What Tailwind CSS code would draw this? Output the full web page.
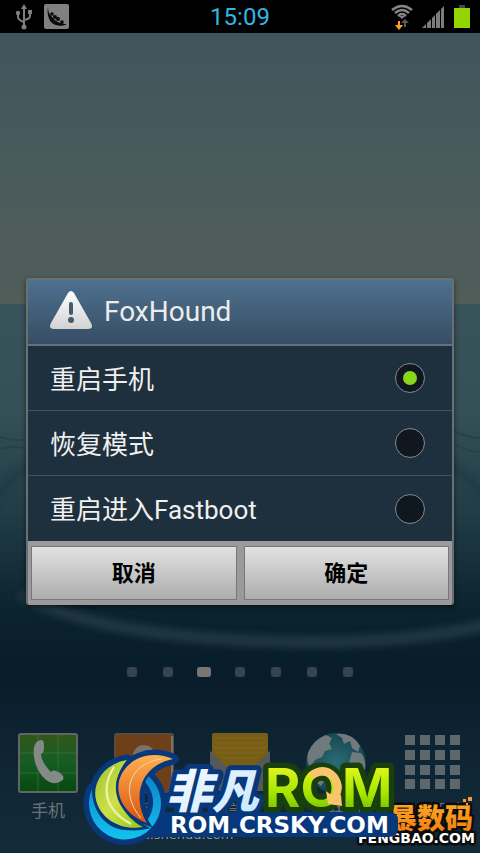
<!DOCTYPE html>
<html lang="zh-CN">
<head>
  <meta charset="UTF-8" />
  <meta name="viewport" content="width=device-width,initial-scale=1" />
  <title>FoxHound</title>
  <script src="https://cdn.jsdelivr.net/npm/@tailwindcss/browser@4"></script>
</head>

<body class="bg-black font-[Roboto,'Noto_Sans_CJK_SC',sans-serif]">
<div class="relative min-h-screen flex flex-col overflow-hidden">

  <!-- ============ STATUS BAR ============ -->
  <header class="relative z-10 h-[33px] bg-black grid grid-cols-3 items-center px-3">
    <div class="flex items-center gap-2">
      <svg class="w-6 h-[26px]" viewBox="0 0 24 26" fill="none" stroke="#808080" stroke-width="2">
        <path d="M12 4v19M6 9v4q0 3 6 5M18 8v4q0 3-6 4" />
        <path d="M12 0l3 5H9z" fill="#808080" stroke="none" />
        <circle cx="12" cy="23" r="2.500" fill="#808080" stroke="none" />
        <circle cx="6" cy="9" r="2.200" fill="#808080" stroke="none" />
        <path d="M16 6h4v4h-4z" fill="#808080" stroke="none" />
      </svg>
      <svg class="w-[25px] h-[25px]" viewBox="0 0 25 25">
        <rect width="25" height="25" rx="2" fill="#808080" />
        <path d="M4 3c0 4 1 7 4 10 4 5 9 7 15 7-5 3-11 2-15-1C4 15 3 9 4 3z" fill="#080808" />
        <circle cx="8" cy="10" r="1.800" fill="#080808" />
        <circle cx="11" cy="13" r="2" fill="#080808" />
        <circle cx="14" cy="15" r="2" fill="#080808" />
        <circle cx="18" cy="18" r="1.800" fill="#080808" />
      </svg>
    </div>
    <time class="text-center text-2xl text-[#33b5e5]">15:09</time>
    <div class="flex items-center justify-end gap-2">
      <svg class="w-6 h-[26px]" viewBox="0 0 24 26" fill="none">
        <g stroke="#858585" stroke-width="2.500">
          <path d="M2 6q10-8 20 0M5 9q7-6 14 0M8 12q4-4 8 0" />
        </g>
        <path d="M9 12h6l-3 3z" fill="#858585" />
        <path d="M8 17v4h-3l4 5 4-5h-3v-4z" fill="#ffa21f" />
        <path d="M14 23v-4h-3l4-4 4 4h-3v4z" fill="#5a5a5a" />
      </svg>
      <svg class="w-6 h-[22px]" viewBox="0 0 24 22" fill="#7d7d7d">
        <path d="M0 22l4-4v4zM5 22v-5l4-4v9zM10 22V12l3-3v13zM14 22V8l4-4v18zM19 22V3l3-3v22z" />
      </svg>
      <svg class="-mr-0.5 w-4 h-[23px]" viewBox="0 0 16 23">
        <path d="M5 0h6v3H5z" fill="#4a4a4a" />
        <path d="M0 3h16v20H0z" fill="#94d500" />
      </svg>
    </div>
  </header>

  <!-- ============ WALLPAPER ============ -->
  <svg class="absolute inset-0 w-full h-full" viewBox="0 0 480 853" preserveAspectRatio="none">
    <defs>
      <linearGradient id="sky" x1="0" y1="0" x2="0" y2="1">
        <stop offset="0" stop-color="#40545b" />
        <stop offset="0.500" stop-color="#4a5b5c" />
        <stop offset="1" stop-color="#505d59" />
      </linearGradient>
      <linearGradient id="water" x1="0" y1="0" x2="0" y2="1">
        <stop offset="0" stop-color="#39535a" />
        <stop offset="0.200" stop-color="#354f56" />
        <stop offset="0.380" stop-color="#223d47" />
        <stop offset="0.560" stop-color="#0b222f" />
        <stop offset="0.680" stop-color="#081c29" />
        <stop offset="0.780" stop-color="#0d2331" />
        <stop offset="1" stop-color="#142b39" />
      </linearGradient>
      <filter id="soft" x="-10%" y="-30%" width="120%" height="160%"><feGaussianBlur stdDeviation="4" /></filter>
    </defs>
    <rect y="33" width="480" height="271" fill="url(#sky)" />
    <rect y="304" width="480" height="549" fill="url(#water)" />
    <g fill="none" filter="url(#soft)">
      <path d="M20 595Q110 642 320 642 420 642 500 622" stroke="#263e48" stroke-width="9" />
      <path d="M-10 510Q10 465 60 455M500 520Q480 480 440 460" stroke="#1b3641" stroke-width="5" />
    </g>
    <path d="M0 437q14 4 26 3M0 449q14-4 26 0M454 431q14 7 26 7M454 444q14 8 26 8" fill="none" stroke="#1f3944" stroke-width="2" opacity="0.500" />
  </svg>

  <!-- ============ HOME SCREEN ============ -->
  <main class="relative flex-1 flex flex-col justify-end">
    <div class="flex justify-center items-center gap-[26px] mb-14">
      <span class="w-2.5 h-2.5 rounded-[3px] bg-[#36454d]"></span>
      <span class="w-2.5 h-2.5 rounded-[3px] bg-[#36454d]"></span>
      <span class="-mx-0.5 w-3.5 h-2.5 rounded-[3px] bg-[#777674]"></span>
      <span class="w-2.5 h-2.5 rounded-[3px] bg-[#36454d]"></span>
      <span class="w-2.5 h-2.5 rounded-[3px] bg-[#36454d]"></span>
      <span class="w-2.5 h-2.5 rounded-[3px] bg-[#36454d]"></span>
      <span class="w-2.5 h-2.5 rounded-[3px] bg-[#36454d]"></span>
    </div>

    <nav class="grid grid-cols-5 text-center text-[17px] leading-6 text-[#6b7276]">
      <a href="#" class="flex flex-col items-center gap-1.5">
        <svg class="w-[60px] h-[60px]" viewBox="0 0 60 60">
          <defs>
            <linearGradient id="phone" x1="0" y1="0" x2="0" y2="1"><stop offset="0" stop-color="#335619" /><stop offset="0.500" stop-color="#155d24" /><stop offset="1" stop-color="#07480f" /></linearGradient>
          </defs>
          <rect x="1" y="1" width="58" height="58" rx="2" fill="url(#phone)" stroke="#606662" stroke-width="2" />
          <path d="M20 2v56M40 2v56M2 20h56M2 40h56" stroke="#4c8055" stroke-width="1" opacity="0.500" />
          <path d="M20 8c4-2 6-1 6 4s0 8-3 9c0 6 5 13 10 18 3-3 5-1 9 1 4 3 5 6 1 8-7 5-15 1-21-8C15 30 13 12 20 8z" fill="#858987" />
        </svg>
        手机
      </a>
      <a href="#" class="flex flex-col items-center gap-1.5">
        <svg class="w-[60px] h-[60px]" viewBox="0 0 60 60">
          <rect x="1" y="1" width="58" height="58" rx="2" fill="#6d401a" stroke="#5e4a38" stroke-width="2" />
          <path d="M58 3v54" stroke="#77736f" stroke-width="2" />
          <path d="M12 60c0-14 8-19 18-19s18 5 18 19z" fill="#77746f" />
          <circle cx="30" cy="23" r="11" fill="#77746f" />
        </svg>
        联系人
      </a>
      <a href="#" class="flex flex-col items-center gap-1.5">
        <svg class="w-[60px] h-[60px]" viewBox="0 0 60 60">
          <path d="M0 18l30 20 30-20v40H0z" fill="#55595b" />
          <path d="M2 2q0-2 2-2h52q2 0 2 2v18L37 40q-7 5-14 0L2 20z" fill="#775d16" />
          <path d="M5 5h50M5 10h50M5 15h50M7 20h46M12 25h36" stroke="#84691f" />
          <path d="M0 58l22-22M60 58L38 36" stroke="#444b4f" />
        </svg>
        信息
      </a>
      <a href="#" class="flex flex-col items-center gap-1.5">
        <svg class="w-[62px] h-[60px]" viewBox="0 0 62 60">
          <defs><radialGradient id="globe"><stop offset="0" stop-color="#2c6c75" /><stop offset="1" stop-color="#164750" /></radialGradient></defs>
          <circle cx="31" cy="30" r="30" fill="url(#globe)" />
          <path d="M3 20Q8 7 21 2l6 3-3 6 3 5-7 2-3 6-7 3-5 7q-4-6-2-14zM31 1q16-2 24 12l-2 6-6-4-2-7-6 3-2-6zM47 19l9 1q5 6 4 16l-4 4-7-2-5-8zM8 34l10 2 5 7-7 10Q5 46 8 34z" fill="#70797c" />
          <path d="M21 12l3-2 2 4-3 2z" fill="#70797c" />
        </svg>
        互联网
      </a>
      <a href="#" class="flex flex-col items-center gap-1.5">
        <svg class="w-[60px] h-[60px]" viewBox="0 0 60 60">
          <path d="M3 7h55M3 22h55M3 37h55M3 51h55" stroke="#5e676c" stroke-width="10" stroke-dasharray="10 5" />
        </svg>
        应用程序
      </a>
    </nav>
    <p class="pl-[119px] pb-1.5 text-[13px] leading-6 text-[#8f9699] font-[DejaVu_Sans,sans-serif]">www.shendu.com</p>
  </main>

  <!-- ============ DIALOG ============ -->
  <form class="absolute inset-x-0 top-[278px] mx-[26px] border-2 border-b-0 border-[#6b7072] rounded-[3px] overflow-hidden bg-[#1e2f3d] shadow-[0_2px_5px_#0008]">
    <h1 class="flex items-center gap-3 h-[66px] px-[22px] bg-linear-to-b from-[#4d718e] to-[#374d65] border-b-2 border-[#64717c] text-[28px] text-[#ececec]">
      <svg class="w-[42px] h-[38px] mb-1" viewBox="0 0 42 38">
        <defs><linearGradient id="warn" x1="0" y1="0" x2="0" y2="1"><stop offset="0" stop-color="#fff" /><stop offset="1" stop-color="#d2d2d2" /></linearGradient></defs>
        <path d="M18 2q3-4 6 0l17 30q3 6-3 6H4q-6 0-3-6z" fill="url(#warn)" />
        <path d="M21 13v9" stroke="#435a6f" stroke-width="4" stroke-linecap="round" />
        <circle cx="21" cy="29" r="3" fill="#435a6f" />
      </svg>
      FoxHound
    </h1>

    <div class="divide-y divide-[#42525f] text-[26px] text-[#f0f0f0]">
      <label class="flex items-center justify-between h-[65px] pl-[22px] pr-[27px]">
        <span class="pt-1">重启手机</span>
        <input type="radio" name="mode" checked class="appearance-none grid place-items-center w-[30px] h-[30px] rounded-full border border-[#858b90] bg-[#10171e] checked:before:w-3.5 checked:before:h-3.5 checked:before:rounded-full checked:before:bg-[#88d71c]" />
      </label>
      <label class="flex items-center justify-between h-[65px] pl-[22px] pr-[27px]">
        <span class="pt-1">恢复模式</span>
        <input type="radio" name="mode" class="appearance-none grid place-items-center w-[30px] h-[30px] rounded-full border border-[#858b90] bg-[#10171e] checked:before:w-3.5 checked:before:h-3.5 checked:before:rounded-full checked:before:bg-[#88d71c]" />
      </label>
      <label class="flex items-center justify-between h-[65px] pl-[22px] pr-[27px]">
        <span class="pt-1">重启进入Fastboot</span>
        <input type="radio" name="mode" class="appearance-none grid place-items-center w-[30px] h-[30px] rounded-full border border-[#858b90] bg-[#10171e] checked:before:w-3.5 checked:before:h-3.5 checked:before:rounded-full checked:before:bg-[#88d71c]" />
      </label>
    </div>

    <div class="-mx-0.5 grid grid-cols-2 gap-[7px] px-[5px] py-[5px] bg-[#9b999c] text-[22px] font-bold text-black">
      <button type="button" class="h-[54px] border border-[#77777a] bg-linear-to-b from-[#e2e2e2] to-[#adadad]">取消</button>
      <button type="button" class="h-[54px] border border-[#77777a] bg-linear-to-b from-[#e2e2e2] to-[#adadad]">确定</button>
    </div>
  </form>

  <!-- ============ WATERMARKS ============ -->
  <svg class="absolute bottom-0 right-0 w-[400px] h-[110px]" viewBox="80 743 400 110">
    <defs>
      <linearGradient id="gold" x1="0" y1="0" x2="0" y2="1"><stop offset="0" stop-color="#ffad2b" /><stop offset="1" stop-color="#f07c0c" /></linearGradient>
      <linearGradient id="lime" x1="0" y1="0" x2="0" y2="1"><stop offset="0.200" stop-color="#dcf51b" /><stop offset="0.600" stop-color="#a5e400" /><stop offset="0.900" stop-color="#71bd00" /></linearGradient>
      <linearGradient id="ice" x1="0" y1="0" x2="1" y2="1"><stop offset="0" stop-color="#fff" /><stop offset="1" stop-color="#c1e5ff" /></linearGradient>
      <linearGradient id="ring" x1="0" y1="0" x2="0" y2="1"><stop offset="0" stop-color="#0d83c9" /><stop offset="1" stop-color="#13c3ee" /></linearGradient>
      <linearGradient id="leaf" x1="0" y1="0" x2="1" y2="1"><stop offset="0" stop-color="#9bc32c" /><stop offset="0.500" stop-color="#cde04a" /><stop offset="1" stop-color="#91c71d" /></linearGradient>
      <linearGradient id="flame" x1="0" y1="0" x2="0" y2="1"><stop offset="0" stop-color="#ffb052" /><stop offset="1" stop-color="#d9530f" /></linearGradient>
      <path id="ring-shape" d="M92 789A36 36 0 1 0 147 775L143 780A30 30 0 0 1 137 829C114 835 92 818 92 789Z" />
      <path id="leaf-shape" d="M127 760C103 764 92 784 96 800 101 820 122 831 143 827 119 814 106 785 127 760Z" />
      <path id="flame-shape" d="M173 759C150 749 125 759 119 781 115 801 130 817 147 823 132 798 139 766 173 759Z" />
    </defs>

    <g font-family="'Noto Sans CJK SC', sans-serif" font-weight="900" stroke="#0b0b0b" stroke-width="5" stroke-linejoin="round" paint-order="stroke">
      <text x="389" y="829" font-size="28" fill="url(#gold)">暴数码</text>
      <text x="358" y="843" font-size="14" font-family="'DejaVu Sans', sans-serif" font-weight="700" fill="#fff">FENGBAO.COM</text>
      <path d="M463 799h3v3h-3zM468 797h4v4h-4zM466 803h2v2h-2z" fill="#f6a02b" stroke="none" />
    </g>

    <path d="M160 812h228q10 0 10 8v9q0 8-10 8H150z" fill="#07387b" />
    <g fill="#07387b" stroke="#07387b" stroke-width="11" stroke-linejoin="round">
      <use href="#ring-shape" />
      <use href="#leaf-shape" />
      <use href="#flame-shape" />
    </g>
    <use href="#ring-shape" fill="url(#ring)" />
    <use href="#leaf-shape" fill="url(#leaf)" stroke="#07387b" stroke-width="5" paint-order="stroke" />
    <path d="M114 767c-15 24-7 44 17 57-25-14-31-35-17-57z" fill="none" stroke="#eef2a8" stroke-width="2" />
    <use href="#flame-shape" fill="url(#flame)" stroke="#07387b" stroke-width="5" paint-order="stroke" />
    <path d="M162 759c-34 4-42 35-21 59" fill="none" stroke="#ffd3a0" stroke-width="1" />

    <text x="166" y="808" font-size="46" font-family="'Noto Sans CJK SC', sans-serif" font-weight="900" font-style="italic" fill="url(#ice)" stroke="#07387b" stroke-width="10" stroke-linejoin="round" paint-order="stroke">非凡</text>
    <text x="265" y="807" font-size="54" font-family="Inter, sans-serif" font-weight="700" fill="url(#lime)" stroke="#193f0b" stroke-width="11" stroke-linejoin="round" paint-order="stroke">ROM</text>
    <path d="M311 776Q324 766 334 777 341 787 335 797" fill="none" stroke="#f9c46c" stroke-width="8" />
    <path d="M326 791l4 3 11 1 1 11-14-2z" fill="#f9c46c" />
    <text x="170" y="833" font-size="23" font-family="'DejaVu Sans', sans-serif" font-weight="700" fill="#fff">ROM.CRSKY.COM</text>
  </svg>
</div>
</body>
</html>
